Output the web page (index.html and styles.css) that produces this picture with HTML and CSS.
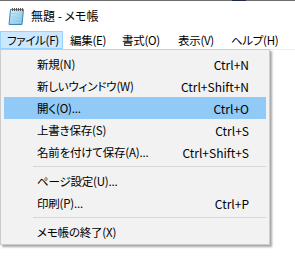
FILE: index.html
```html
<!DOCTYPE html>
<html lang="ja">
<head>
<meta charset="utf-8">
<title>無題 - メモ帳</title>
<link rel="stylesheet" href="styles.css">
</head>
<body>
<div class="window">
  <div class="edge"><span class="edge-dark"></span></div>
  <header class="titlebar">
    <svg class="app-icon" width="18" height="18" viewBox="0 0 18 18">
      <defs>
        <linearGradient id="pg" x1="0" y1="0" x2="1" y2="1">
          <stop offset="0" stop-color="#d9f0fb"/>
          <stop offset="1" stop-color="#6fbbe3"/>
        </linearGradient>
      </defs>
      <path d="M3.5 2.5 H16.5 L15 17.5 H2 Z" fill="url(#pg)" stroke="#3d86b8" stroke-width="1"/>
      <g stroke="#a6d6ee" stroke-width="1">
        <line x1="4.5" y1="6.5" x2="14.5" y2="6.5"/>
        <line x1="4.2" y1="9.5" x2="14.2" y2="9.5"/>
        <line x1="3.9" y1="12.5" x2="13.9" y2="12.5"/>
        <line x1="3.6" y1="15.5" x2="13.6" y2="15.5"/>
      </g>
      <g stroke="#555" stroke-width="1">
        <line x1="5.5" y1="1" x2="5.5" y2="4"/>
        <line x1="7.5" y1="1" x2="7.5" y2="4"/>
        <line x1="9.5" y1="1" x2="9.5" y2="4"/>
        <line x1="11.5" y1="1" x2="11.5" y2="4"/>
        <line x1="13.5" y1="1" x2="13.5" y2="4"/>
        <line x1="15.5" y1="1" x2="15.5" y2="4"/>
      </g>
    </svg>
    <span class="title">無題 - メモ帳</span>
  </header>
  <nav class="menubar">
    <span class="mb-item mb-file active">ファイル(F)</span>
    <span class="mb-item mb-edit">編集(E)</span>
    <span class="mb-item mb-format">書式(O)</span>
    <span class="mb-item mb-view">表示(V)</span>
    <span class="mb-item">ヘルプ(H)</span>
  </nav>
  <div class="editor"></div>

  <ul class="dropdown">
    <li class="item"><span class="label">新規(N)</span><span class="key">Ctrl+N</span></li>
    <li class="item"><span class="label">新しいウィンドウ(W)</span><span class="key">Ctrl+Shift+N</span></li>
    <li class="item hover"><span class="label">開く(O)...</span><span class="key">Ctrl+O</span></li>
    <li class="item"><span class="label">上書き保存(S)</span><span class="key">Ctrl+S</span></li>
    <li class="item"><span class="label">名前を付けて保存(A)...</span><span class="key">Ctrl+Shift+S</span></li>
    <li class="sep"></li>
    <li class="item"><span class="label">ページ設定(U)...</span><span class="key"></span></li>
    <li class="item"><span class="label">印刷(P)...</span><span class="key">Ctrl+P</span></li>
    <li class="sep"></li>
    <li class="item"><span class="label">メモ帳の終了(X)</span><span class="key"></span></li>
  </ul>
</div>
</body>
</html>
```

FILE: styles.css
```css
* { box-sizing: border-box; }
html, body {
  margin: 0;
  padding: 0;
  background: #ffffff;
}
body {
  font-family: "Noto Sans CJK JP", "Noto Sans", sans-serif;
  font-size: 11.5px;
  font-feature-settings: "palt";
  color: #000;
  width: 295px;
  height: 265px;
  overflow: hidden;
}
.window {
  position: relative;
  width: 295px;
  height: 265px;
  background: #fff;
}
.edge {
  height: 1px;
  background: #6e6e6e;
  display: flex;
}
.edge-dark {
  margin-left: 232px;
  width: 14px;
  height: 1px;
  background: #1f2a4a;
}
.titlebar {
  height: 29px;
  display: flex;
  align-items: center;
  padding-left: 7px;
}
.app-icon {
  display: block;
}
.title {
  margin-left: 6px;
  line-height: 16px;
  font-size: 12px;
}
.menubar {
  height: 19px;
  display: flex;
  padding-top: 1px;
}
.mb-item {
  height: 18px;
  line-height: 16px;
  padding: 0 0 0 6px;
  border: 1px solid transparent;
  white-space: nowrap;
  letter-spacing: -0.3px;
}
.mb-file { width: 63px; }
.mb-edit { width: 52px; }
.mb-format { width: 56px; }
.mb-view { width: 53px; }
.mb-item.active {
  background: #cce8ff;
  border-color: #99d1ff;
}
.editor {
  border-top: 1px solid #f0f0f0;
}
.dropdown {
  position: absolute;
  left: 0;
  top: 49px;
  width: 270px;
  margin: 0;
  padding: 3px 2px 1px 2px;
  list-style: none;
  background: #f2f2f2;
  border: 1px solid #cccccc;
  box-shadow: 2px 2px 2px rgba(0, 0, 0, 0.35);
}
.item {
  height: 22px;
  display: flex;
  align-items: center;
  justify-content: space-between;
  padding: 0 17px 0 33px;
  margin: 0 1px;
  white-space: nowrap;
}
.label {
  letter-spacing: -0.2px;
}
.item.hover {
  background: #91c9f7;
}
.key {
  font-size: 12px;
  font-feature-settings: normal;
}
.sep {
  height: 7px;
  display: flex;
  align-items: center;
  margin-left: 30px;
  margin-right: 1px;
}
.sep::before {
  content: "";
  flex: 1;
  height: 1px;
  background: #d7d7d7;
}
```
